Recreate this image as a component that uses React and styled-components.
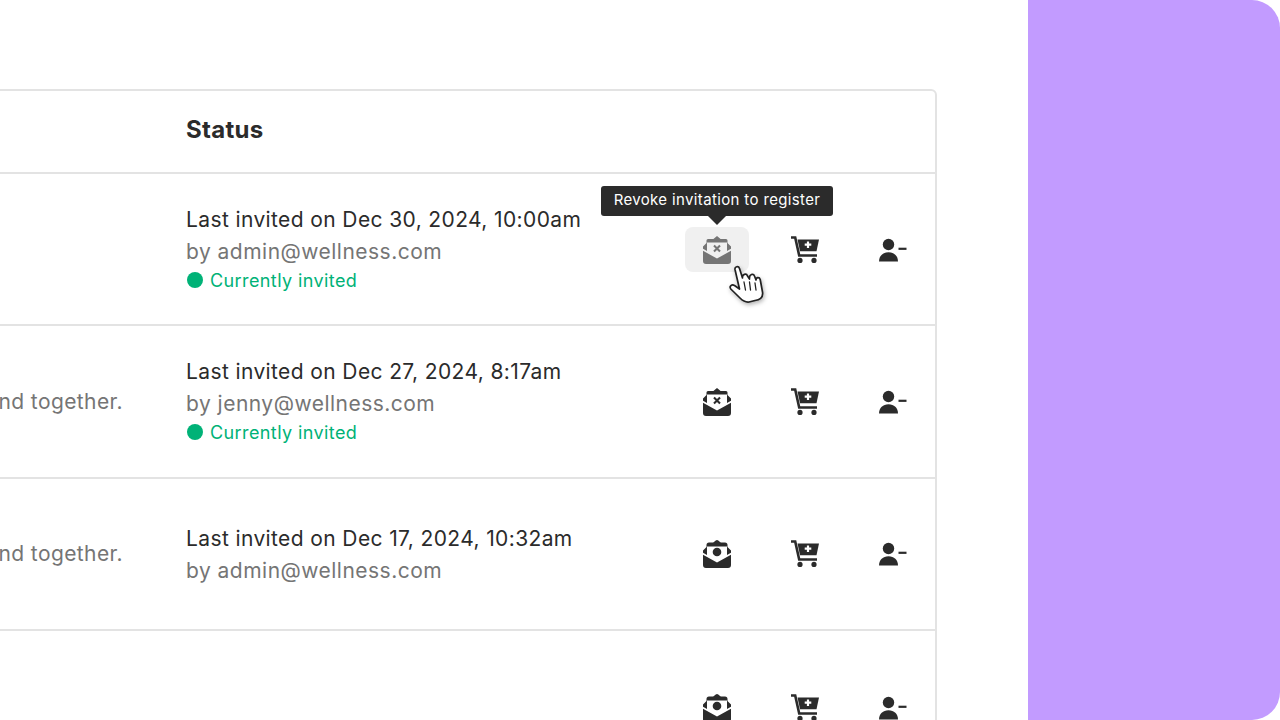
import React from "react";
import styled, { createGlobalStyle } from "styled-components";

const Global = createGlobalStyle`
  html, body { margin: 0; padding: 0; background: #fff; }
  body { font-family: Inter, "Liberation Sans", sans-serif; }
`;

const Page = styled.div`
  width: 1280px; height: 720px; display: flex; overflow: hidden; background: #fff;
`;
const Main = styled.main`
  width: 1028px; height: 720px; padding-top: 89px; box-sizing: border-box; overflow: hidden;
`;
const Aside = styled.aside`
  width: 252px; height: 720px; background: #c29bff; border-radius: 0 28px 28px 0;
`;
const Card = styled.section`
  width: 1037px; margin-left: -100px; box-sizing: border-box;
  border: 2px solid #e3e3e3; border-radius: 6px; background: #fff;
`;
const HeaderRow = styled.div`
  height: 83px; display: flex; align-items: center; box-sizing: border-box;
  border-bottom: 2px solid #e3e3e3; padding-left: 284px; padding-bottom: 4px;
`;
const HeaderTitle = styled.h2`
  margin: 0; font-size: 24px; font-weight: 700; color: #2b2b2b; letter-spacing: 0.3px;
`;
const Row = styled.div`
  height: 152.33px; display: flex; align-items: center; box-sizing: border-box;
  border-bottom: ${p => (p.$last ? "none" : "2px solid #e3e3e3")};
`;
const Description = styled.div`
  width: 284px; flex: none; box-sizing: border-box; padding-right: 63px; overflow: hidden;
  display: flex; justify-content: flex-end; white-space: nowrap;
  font-size: 21px; color: #757575; letter-spacing: 0.4px;
`;
const StatusCell = styled.div`
  flex: 1; display: flex; flex-direction: column; padding-top: 2px;
`;
const Invited = styled.div`
  font-size: 21px; line-height: 32px; color: #2b2b2b; letter-spacing: 0.385px; white-space: nowrap;
`;
const ByLine = styled.div`
  font-size: 21px; line-height: 32px; color: #757575; letter-spacing: 0.48px; white-space: nowrap;
`;
const Current = styled.div`
  display: flex; align-items: center; gap: 7px; height: 32px; margin-top: -4px; padding-left: 1px;
  font-size: 18px; color: #00b277; letter-spacing: 0.4px;
`;
const Dot = styled.span`
  width: 16px; height: 16px; border-radius: 50%; background: #00b277; flex: none;
`;
const Actions = styled.div`
  display: flex; gap: 24px; padding: 1px 10px 0 0; flex: none;
`;
const ActionWrap = styled.div`
  position: relative;
`;
const ActionButton = styled.button`
  width: 64px; height: 45px; padding: 0; border: 0; border-radius: 8px;
  display: flex; align-items: center; justify-content: center;
  background: ${p => (p.$active ? "#f0f0f0" : "transparent")};
  color: #2b2b2b;
  svg { display: block; opacity: ${p => (p.$active ? 0.62 : 1)}; }
`;
const Tooltip = styled.div`
  position: absolute; left: 50%; top: -41px; transform: translateX(-50%);
  width: 232px; height: 30px; box-sizing: border-box; padding-bottom: 4px;
  display: flex; align-items: center; justify-content: center;
  background: #2b2b2b; border-radius: 3px; color: #fff; font-size: 15px; white-space: nowrap; letter-spacing: 0.36px;
  &::after {
    content: ""; position: absolute; left: 50%; bottom: -9px; margin-left: -9px;
    border-left: 9px solid transparent; border-right: 9px solid transparent; border-top: 9px solid #2b2b2b;
  }
`;
const Pointer = styled.svg`
  position: absolute; left: 44px; top: 38px; filter: drop-shadow(1px 2px 2px rgba(0,0,0,.3));
`;

const Body = () => (
  <path d="M0 14.800L14 22.500l14-7.700V25a3 3 0 0 1-3 3H3a3 3 0 0 1-3-3z" fill="currentColor" />
);

const RevokeIcon = () => (
  <svg width="28" height="28" viewBox="0 0 28 28">
    <path d="M14 0l3.600 3H23a1.500 1.500 0 0 1 1.500 1.500V7L28 10.500v2.200l-4 2.200V6.500H4v8.400l-4-2.200v-2.200L3.500 7V4.500A1.500 1.500 0 0 1 5 3h5.400z" fill="currentColor" />
    <Body />
    <path d="M11 9.500l6 6M17 9.500l-6 6" stroke="currentColor" strokeWidth="2.100" />
  </svg>
);
const PersonIcon = () => (
  <svg width="28" height="28" viewBox="0 0 28 28">
    <path d="M14 0c2 0 2.500 2.500 4 2.500h4a2.500 2.500 0 0 1 2.500 2.500v2L28 10.500v2.200l-4 2.200V6.500H4v8.400l-4-2.200v-2.200L3.500 7V5A2.500 2.500 0 0 1 6 2.500h4C11.500 2.500 12 0 14 0z" fill="currentColor" />
    <Body />
    <circle cx="14" cy="12" r="4.300" fill="currentColor" />
  </svg>
);
const CartIcon = () => (
  <svg width="28" height="28" viewBox="0 0 28 28">
    <path d="M0 1.500h4.200L8.200 19.500H26" fill="none" stroke="currentColor" strokeWidth="2.600" />
    <path d="M6.500 3.500H28L25.500 15.300H9z" fill="currentColor" />
    <path d="M17 5.500v6.500M13.700 8.700h6.600" stroke="#fff" strokeWidth="2.200" />
    <circle cx="9" cy="24.400" r="2.600" fill="currentColor" />
    <circle cx="23" cy="24.400" r="2.600" fill="currentColor" />
  </svg>
);
const UserMinusIcon = () => (
  <svg width="28" height="28" viewBox="0 0 28 28">
    <circle cx="9.500" cy="8.500" r="5.700" fill="currentColor" />
    <path d="M0 25.500C0 19.800 4 16.200 9.500 16.200S19 19.800 19 25.500z" fill="currentColor" />
    <path d="M19.500 12.800H27.500" stroke="currentColor" strokeWidth="2.200" />
  </svg>
);
const HandCursor = () => (
  <Pointer width="36" height="40" viewBox="0 0 36 40">
    <path
      d="M6 4.500C5.500 1.500 9.500 .5 10.500 3.500L13.500 13C13 9 17.500 8 18.500 11L20.500 14C20 9 24.500 8 25.500 11L27 15C27 12 30.500 12 31.200 14.500L33.500 27C34.500 33 30 35 26 35.500L20 37C16 37.500 14 36 11 33L1.800 24C-.2 21 3 19 5.500 20.500L10.500 24z"
      fill="#fff" stroke="#222" strokeWidth="1.700" strokeLinejoin="round"
    />
    <path d="M15 17l1.500 8M20.500 17l1 8M26 18l1 7" fill="none" stroke="#222" strokeWidth="1.300" strokeLinecap="round" />
  </Pointer>
);

const rows = [
  { desc: "", when: "Last invited on Dec 30, 2024, 10:00am", by: "by admin@wellness.com", current: true, Mail: RevokeIcon, active: true },
  { desc: "Mind, body and together.", when: "Last invited on Dec 27, 2024, 8:17am", by: "by jenny@wellness.com", current: true, Mail: RevokeIcon },
  { desc: "Mind, body and together.", when: "Last invited on Dec 17, 2024, 10:32am", by: "by admin@wellness.com", Mail: PersonIcon },
  { desc: "", Mail: PersonIcon, last: true },
];

export default function App() {
  return (
    <Page>
      <Global />
      <Main>
        <Card>
          <HeaderRow><HeaderTitle>Status</HeaderTitle></HeaderRow>
          {rows.map((r, i) => (
            <Row key={i} $last={r.last}>
              <Description>{r.desc}</Description>
              <StatusCell>
                {r.when && <Invited>{r.when}</Invited>}
                {r.by && <ByLine>{r.by}</ByLine>}
                {r.current && <Current><Dot />Currently invited</Current>}
              </StatusCell>
              <Actions>
                <ActionWrap>
                  <ActionButton $active={r.active}><r.Mail /></ActionButton>
                  {r.active && <Tooltip>Revoke invitation to register</Tooltip>}
                  {r.active && <HandCursor />}
                </ActionWrap>
                <ActionWrap><ActionButton><CartIcon /></ActionButton></ActionWrap>
                <ActionWrap><ActionButton><UserMinusIcon /></ActionButton></ActionWrap>
              </Actions>
            </Row>
          ))}
        </Card>
      </Main>
      <Aside />
    </Page>
  );
}
